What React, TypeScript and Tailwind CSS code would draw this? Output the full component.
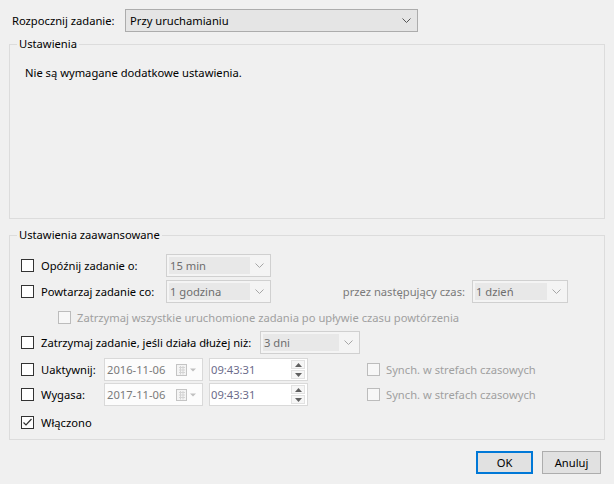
import React from "react";

type BoxProps = { checked?: boolean; disabled?: boolean };

function CheckBox({ checked, disabled }: BoxProps) {
  return (
    <span
      className={`flex w-[13px] h-[13px] shrink-0 items-center justify-center border ${
        disabled ? "border-[#bcbcbc] bg-[#f7f7f7]" : "border-[#333333] bg-white"
      }`}
    >
      {checked && (
        <svg width="11" height="11" viewBox="0 0 11 11">
          <path d="M1.5 5.5 L4 8 L9.5 2" fill="none" stroke="#333" strokeWidth="1.2" />
        </svg>
      )}
    </span>
  );
}

function Chevron({ color = "#a6a6a6" }: { color?: string }) {
  return (
    <svg width="9" height="5" viewBox="0 0 9 5">
      <path d="M0.5 0.5 L4.5 4.5 L8.5 0.5" fill="none" stroke={color} strokeWidth="1" />
    </svg>
  );
}

function Combo({ value, width }: { value: string; width: string }) {
  return (
    <div className={`flex h-[23px] ${width} shrink-0 items-stretch border border-[#d0d0d0] bg-[#f4f4f4] p-[2px]`}>
      <span className="flex flex-1 items-center bg-[#e8e8e8] pl-[1px] text-[#6d6d6d]">{value}</span>
      <span className="flex w-[18px] items-center justify-center">
        <Chevron />
      </span>
    </div>
  );
}

function DateField({ value }: { value: string }) {
  return (
    <div className="flex h-[23px] w-[99px] shrink-0 items-center border border-[#d9d9d9] bg-[#fcfcfc] pl-[2px] text-[#7a7a7a]">
      <span className="flex-1">{value}</span>
      <svg width="22" height="12" viewBox="0 0 22 12" className="mr-[4px]">
        <rect x="0.5" y="0.5" width="10" height="11" fill="#f4f4f4" stroke="#c4c4c4" />
        <path d="M3 3.5H9M3 6H9M3 8.5H9M4.5 2V10.5M7 2V10.5" stroke="#d4d4d4" strokeWidth="1" />
        <path d="M14 4.5 L20 4.5 L17 7.5 Z" fill="#c0c0c0" />
      </svg>
    </div>
  );
}

function TimeField({ value }: { value: string }) {
  return (
    <div className="flex h-[23px] w-[99px] shrink-0 items-center border border-[#d9d9d9] bg-white pl-[1px] text-[#6b6b8a]">
      <span className="flex-1">{value}</span>
      <span className="mr-[2px] flex flex-col gap-[1px]">
        <span className="flex h-[9px] w-[14px] items-center justify-center border border-[#e2e2e2] bg-[#f6f6f6]">
          <svg width="7" height="4" viewBox="0 0 7 4">
            <path d="M0 4 L3.5 0 L7 4 Z" fill="#606060" />
          </svg>
        </span>
        <span className="flex h-[9px] w-[14px] items-center justify-center border border-[#e2e2e2] bg-[#f6f6f6]">
          <svg width="7" height="4" viewBox="0 0 7 4">
            <path d="M0 0 L7 0 L3.5 4 Z" fill="#606060" />
          </svg>
        </span>
      </span>
    </div>
  );
}

export default function App() {
  return (
    <div className="w-[614px] h-[484px] overflow-hidden whitespace-nowrap bg-[#f0f0f0] pt-[9px] text-[11.2px] leading-[16px] text-black font-['Noto_Sans',sans-serif]">
      {/* start row */}
      <div className="flex h-[23px] items-center pl-[12px]">
        <span className="w-[113px]">Rozpocznij zadanie:</span>
        <div className="flex h-[23px] w-[293px] items-center border border-[#acacac] bg-[#e5e5e5] pl-[4px] pr-[6px]">
          <span className="flex-1">Przy uruchamianiu</span>
          <Chevron color="#555555" />
        </div>
      </div>

      <fieldset className="mx-[9px] mt-[4px] h-[183px] w-[596px] border border-[#dcdcdc]">
        <legend className="ml-[7px] px-[2px]">Ustawienia</legend>
        <p className="mt-[13px] pl-[15px]">Nie są wymagane dodatkowe ustawienia.</p>
      </fieldset>

      <fieldset className="mx-[9px] mt-[8px] h-[213px] w-[596px] border border-[#dcdcdc] pl-[11px]">
        <legend className="ml-[-4px] px-[2px]">Ustawienia zaawansowane</legend>

        <div className="mt-[11px] flex h-[23px] items-center">
          <CheckBox />
          <span className="ml-[7px] w-[125px]">Opóźnij zadanie o:</span>
          <Combo value="15 min" width="w-[105px]" />
        </div>

        <div className="mt-[3px] flex h-[23px] items-center">
          <CheckBox />
          <span className="ml-[7px] w-[125px]">Powtarzaj zadanie co:</span>
          <Combo value="1 godzina" width="w-[105px]" />
          <span className="w-[194px] text-right text-[#7a7a7a]">przez następujący czas:</span>
          <span className="ml-[7px]">
            <Combo value="1 dzień" width="w-[96px]" />
          </span>
        </div>

        <div className="mt-[3px] flex h-[23px] items-center pl-[37px]">
          <CheckBox disabled />
          <span className="ml-[6px] text-[#a0a0a0]">
            Zatrzymaj wszystkie uruchomione zadania po upływie czasu powtórzenia
          </span>
        </div>

        <div className="mt-[2px] flex h-[23px] items-center">
          <CheckBox />
          <span className="ml-[7px] w-[219px]">Zatrzymaj zadanie, jeśli działa dłużej niż:</span>
          <Combo value="3 dni" width="w-[100px]" />
        </div>

        <div className="mt-[4px] flex h-[23px] items-center">
          <CheckBox />
          <span className="ml-[7px] w-[63px]">Uaktywnij:</span>
          <DateField value="2016-11-06" />
          <span className="ml-[6px]">
            <TimeField value="09:43:31" />
          </span>
          <span className="ml-[59px] flex items-center">
            <CheckBox disabled />
            <span className="ml-[6px] text-[#a0a0a0]">Synch. w strefach czasowych</span>
          </span>
        </div>

        <div className="mt-[2px] flex h-[23px] items-center">
          <CheckBox />
          <span className="ml-[7px] w-[63px]">Wygasa:</span>
          <DateField value="2017-11-06" />
          <span className="ml-[6px]">
            <TimeField value="09:43:31" />
          </span>
          <span className="ml-[59px] flex items-center">
            <CheckBox disabled />
            <span className="ml-[6px] text-[#a0a0a0]">Synch. w strefach czasowych</span>
          </span>
        </div>

        <div className="mt-[5px] flex h-[23px] items-center">
          <CheckBox checked />
          <span className="ml-[7px]">Włączono</span>
        </div>
      </fieldset>

      <div className="mt-[11px] flex justify-end gap-[9px] pr-[13px]">
        <button className="h-[23px] w-[57px] border-2 border-[#0078d7] bg-[#e1e1e1]">OK</button>
        <button className="h-[23px] w-[59px] border border-[#adadad] bg-[#e1e1e1]">Anuluj</button>
      </div>
    </div>
  );
}
